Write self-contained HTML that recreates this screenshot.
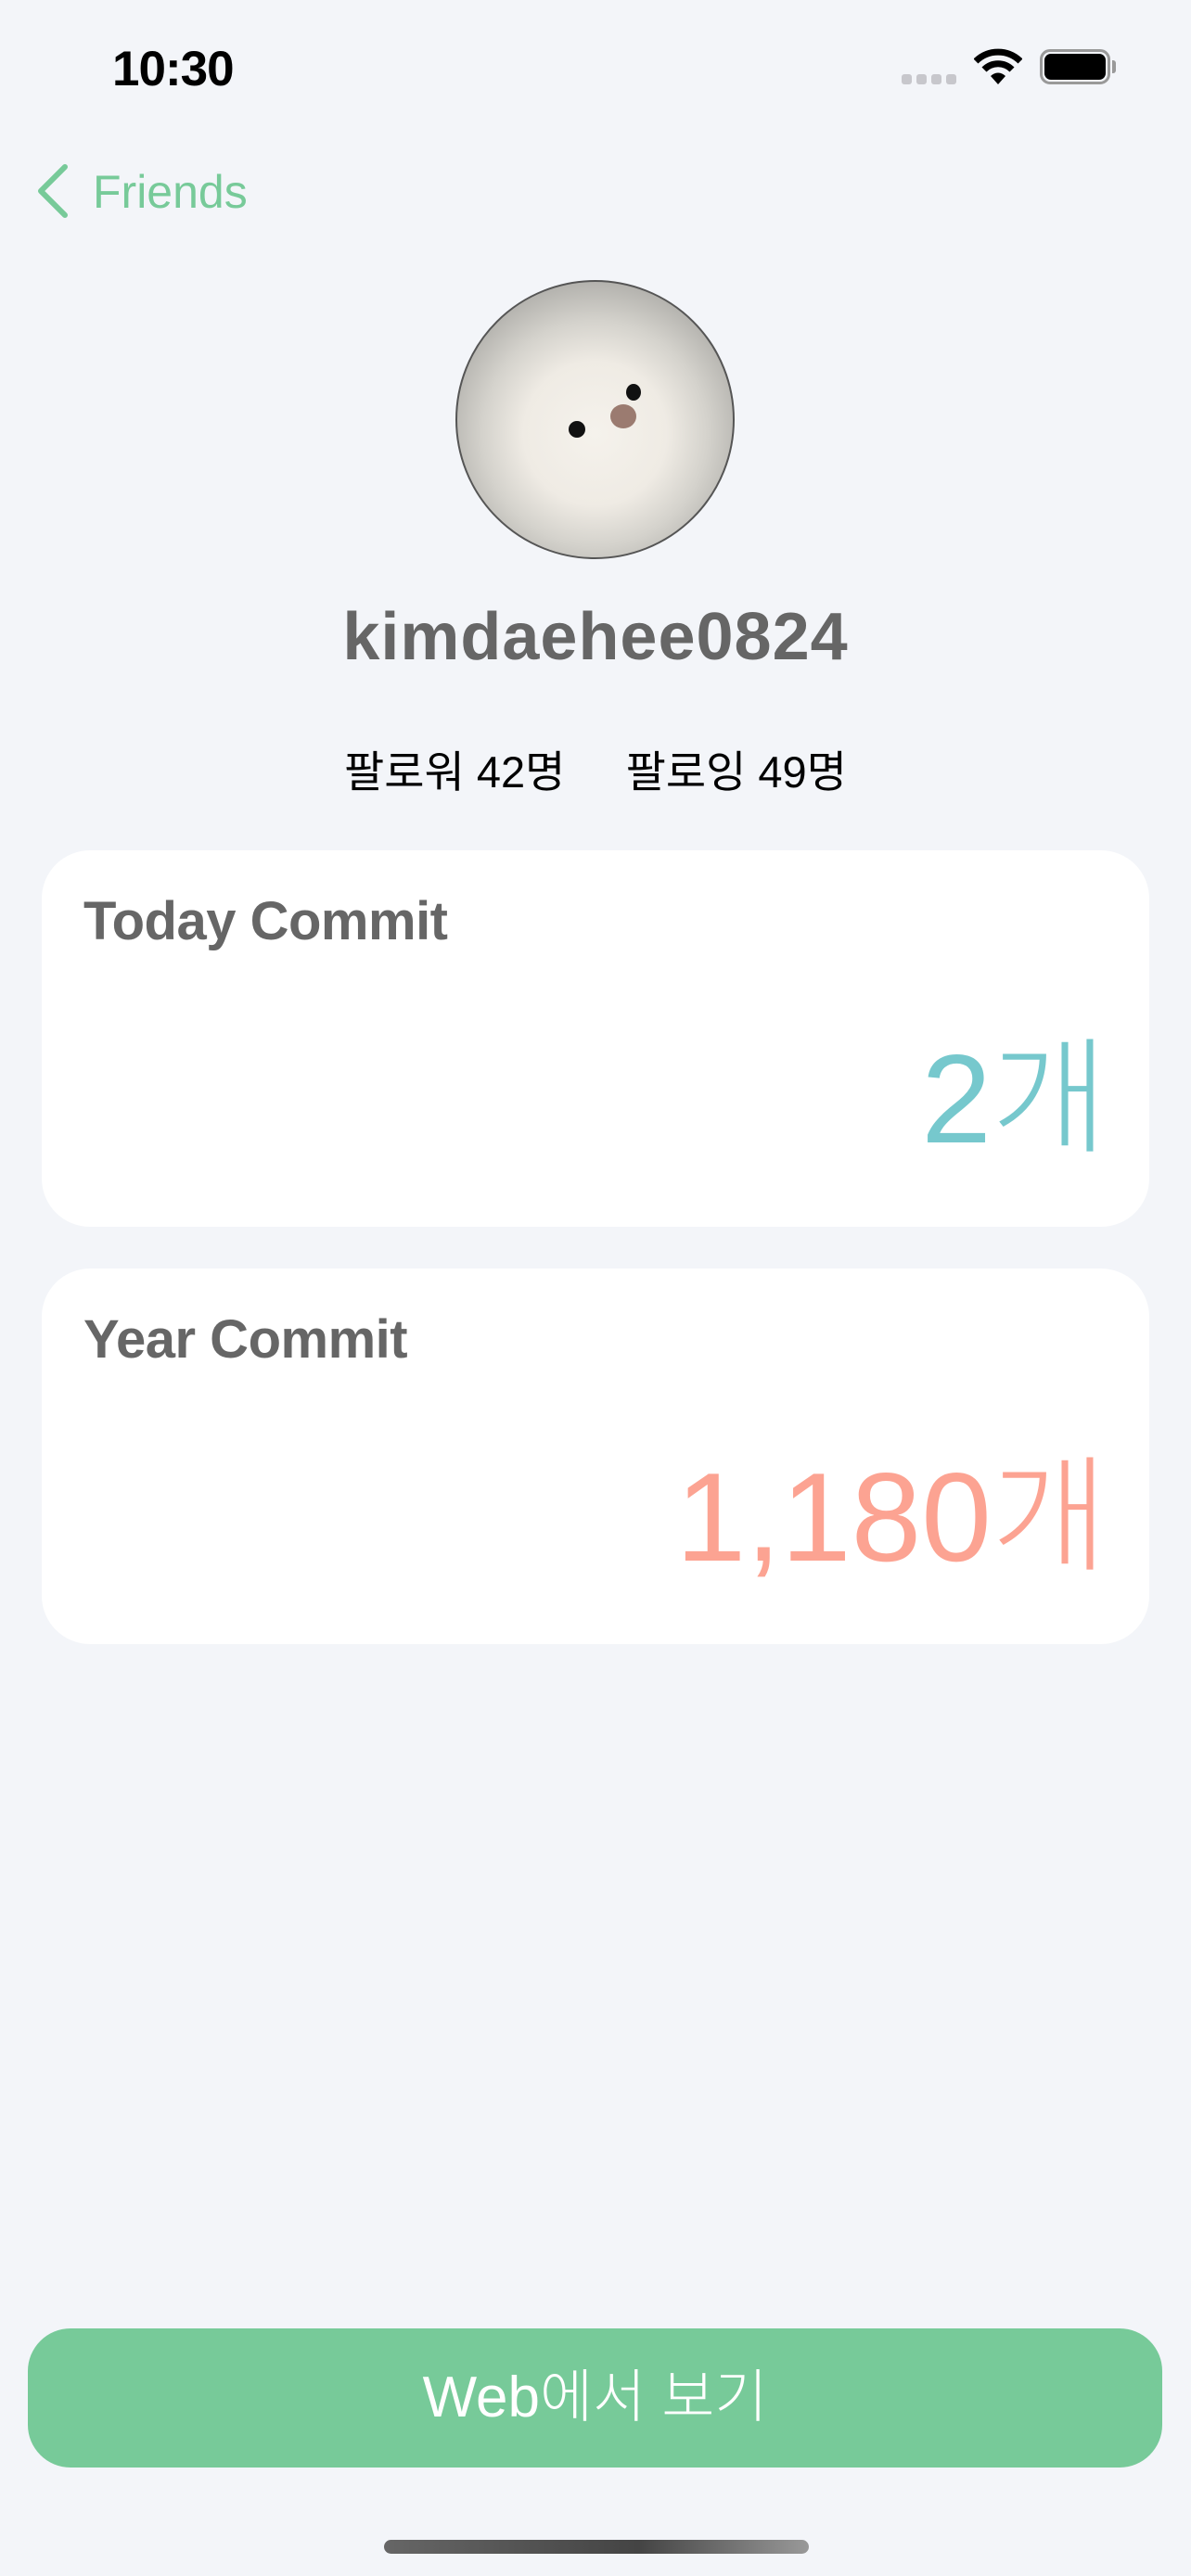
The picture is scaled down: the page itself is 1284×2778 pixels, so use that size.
<!DOCTYPE html>
<html><head><meta charset="utf-8"><style>
*{margin:0;padding:0;box-sizing:border-box}
body{width:1284px;height:2778px;background:#f3f5f9;position:relative;overflow:hidden;font-family:"Liberation Sans","Noto Sans CJK KR",sans-serif}
.a{position:absolute}
.card{position:absolute;left:45px;width:1194px;background:#fff;border-radius:52px}
.title{position:absolute;left:45px;font-size:58px;font-weight:bold;color:#666;letter-spacing:-0.5px}
.num{position:absolute;right:45px;font-weight:300}
</style></head><body>
<div class="a" style="left:121px;top:44px;font-size:53px;font-weight:bold;color:#000;letter-spacing:-1px">10:30</div>
<div class="a" style="left:972px;top:80px;width:58px;height:11px">
<div class="a" style="left:0;top:0;width:11px;height:11px;border-radius:3px;background:#c7c7cc"></div>
<div class="a" style="left:16px;top:0;width:11px;height:11px;border-radius:3px;background:#c7c7cc"></div>
<div class="a" style="left:32px;top:0;width:11px;height:11px;border-radius:3px;background:#c7c7cc"></div>
<div class="a" style="left:48px;top:0;width:11px;height:11px;border-radius:3px;background:#c7c7cc"></div></div>
<svg class="a" style="left:1050px;top:52px" width="52" height="40" viewBox="0 0 52 40"><path d="M2 14 A34 34 0 0 1 50 14" stroke="#000" stroke-width="7" fill="none"/><path d="M11 23 A21 21 0 0 1 41 23" stroke="#000" stroke-width="7" fill="none"/><path d="M18 30 L26 39 L34 30 A11 11 0 0 0 18 30Z" fill="#000"/></svg>
<div class="a" style="left:1121px;top:53px;width:76px;height:38px;border:3px solid #999;border-radius:11px"></div>
<div class="a" style="left:1126px;top:58px;width:66px;height:28px;background:#000;border-radius:7px"></div>
<div class="a" style="left:1199px;top:65px;width:4px;height:14px;background:#999;border-radius:0 3px 3px 0"></div>
<svg class="a" style="left:36px;top:176px" width="40" height="60"><path d="M34 4 L8 30 L34 56" stroke="#77ca99" stroke-width="6" fill="none" stroke-linecap="round" stroke-linejoin="round"/></svg>
<div class="a" style="left:100px;top:178px;font-size:50px;color:#77ca99">Friends</div>
<div class="a" style="left:491px;top:302px;width:301px;height:301px;border-radius:50%;border:2px solid #555;overflow:hidden;background:radial-gradient(circle at 50% 55%,#f5f2ec 0,#efebe4 35%,#d4d2cc 55%,#a9a8a4 80%,#6e6d6a 100%)">
<div class="a" style="left:120px;top:150px;width:18px;height:18px;border-radius:50%;background:#111"></div>
<div class="a" style="left:182px;top:110px;width:16px;height:18px;border-radius:50%;background:#111"></div>
<div class="a" style="left:165px;top:132px;width:28px;height:26px;border-radius:50%;background:#9b7b70"></div></div>
<div class="a" style="left:0;width:1284px;top:646px;text-align:center;font-size:72px;font-weight:bold;color:#666;letter-spacing:1px">kimdaehee0824</div>
<div class="a" style="left:0;width:1284px;top:794px;text-align:center;font-size:47px;color:#000">팔로워 42명&nbsp;&nbsp;&nbsp;&nbsp;&nbsp;팔로잉 49명</div>
<div class="card" style="top:917px;height:406px">
<div class="title" style="top:43px">Today Commit</div>
<div class="num" style="top:200px;font-size:136px;color:#76c8cd;line-height:1">2개</div></div>
<div class="card" style="top:1368px;height:405px">
<div class="title" style="top:43px">Year Commit</div>
<div class="num" style="top:200px;font-size:136px;color:#fca392;line-height:1">1,180개</div></div>
<div class="a" style="left:30px;top:2511px;width:1223px;height:150px;background:#77ca99;border-radius:46px;color:#fff;font-size:62px;text-align:center;line-height:150px;font-weight:300">Web에서 보기</div>
<div class="a" style="left:414px;top:2739px;width:458px;height:15px;border-radius:8px;background:linear-gradient(90deg,#666,#444 60%,#999)"></div>
</body></html>
